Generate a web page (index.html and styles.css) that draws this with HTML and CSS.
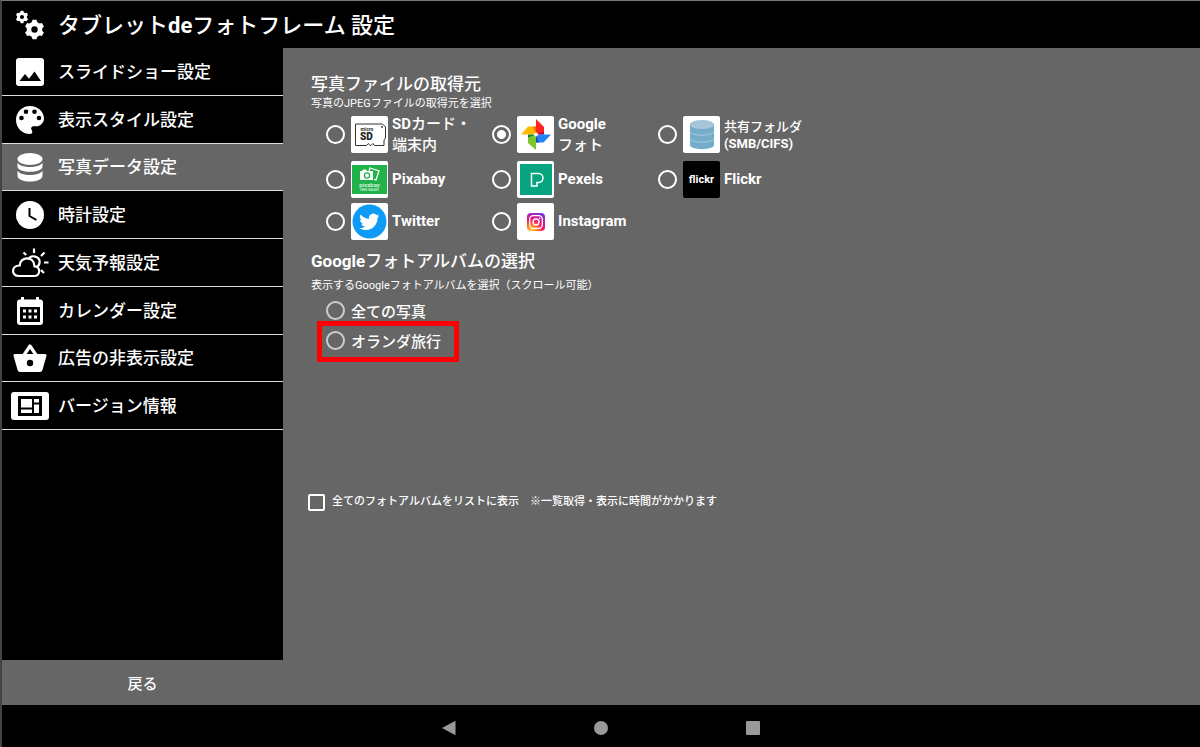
FILE: index.html
```html
<!DOCTYPE html>
<html lang="ja">
<head>
<meta charset="utf-8">
<meta name="viewport" content="width=device-width, initial-scale=1">
<title>タブレットdeフォトフレーム 設定</title>
<link rel="stylesheet" href="styles.css">
</head>
<body>
<div class="screen">
  <header class="header">
    <svg class="icon" viewBox="0 0 40 40" aria-hidden="true">
      <defs>
        <g id="gear">
          <circle r="5.5" fill="none" stroke="#fff" stroke-width="4.6"/>
          <g fill="#fff">
            <path id="tooth" d="M-3-6.5L-2-9.7H2L3-6.5z"/>
            <use href="#tooth" transform="rotate(60)"/><use href="#tooth" transform="rotate(120)"/><use href="#tooth" transform="rotate(180)"/><use href="#tooth" transform="rotate(240)"/><use href="#tooth" transform="rotate(300)"/>
          </g>
        </g>
      </defs>
      <use href="#gear" transform="translate(12 12) scale(.64)"/>
      <use href="#gear" transform="translate(24.5 24.5)"/>
    </svg>
    <h1 class="title">タブレット<b>de</b>フォトフレーム 設定</h1>
  </header>

  <div class="body">
    <aside class="sidebar">
      <nav class="menu">
        <button class="item" type="button">
          <svg class="icon" viewBox="0 0 40 40" aria-hidden="true"><rect x="6" y="6" width="28" height="28" rx="3" fill="#fff"/><path d="M9.500 29l5.500-7 4 4.700 5.500-7.200L31 29z" fill="#000"/></svg>
          スライドショー設定
        </button>
        <button class="item" type="button">
          <svg class="icon" viewBox="0 0 40 40" aria-hidden="true"><path d="M20 6C12 6 6 12.300 6 20s6 14 14 14c1.300 0 2.300-1 2.300-2.300 0-.6-.2-1.200-.6-1.600-.4-.4-.6-.9-.6-1.500 0-1.300 1-2.300 2.300-2.300H26c4.400 0 8-3.500 8-7.800C34 11.600 27.800 6 20 6z" fill="#fff"/><g fill="#000"><circle cx="11.500" cy="18" r="2.300"/><circle cx="16" cy="11.800" r="2.300"/><circle cx="24.500" cy="11.800" r="2.300"/><circle cx="29" cy="18" r="2.300"/></g></svg>
          表示スタイル設定
        </button>
        <button class="item item-active" type="button" aria-current="page">
          <svg class="icon" viewBox="0 0 40 40" aria-hidden="true" fill="#fff"><ellipse cx="20" cy="12" rx="12.500" ry="6"/><path d="M7.500 15.500c2.500 6 22.500 6 25 0v4c0 7-25 7-25 0z"/><path d="M7.500 23.500c2.500 6 22.500 6 25 0v5c0 8-25 8-25 0z"/></svg>
          写真データ設定
        </button>
        <button class="item" type="button">
          <svg class="icon" viewBox="0 0 40 40" aria-hidden="true"><circle cx="20" cy="20" r="14" fill="#fff"/><path d="M19.500 13v8l7 4" fill="none" stroke="#000" stroke-width="2"/></svg>
          時計設定
        </button>
        <button class="item" type="button">
          <svg class="icon" viewBox="0 0 40 40" aria-hidden="true" fill="none" stroke="#fff" stroke-width="2.200"><path d="M8.800 33h15.400c6.600 0 6.600-9.500.3-9.700C24.200 12.500 10 13 9.700 22.500 1 22.500 1 33 8.800 33z"/><path d="M18 16.500c3-5.500 12.500-3.500 11.500 3.500-.3 2-1.600 3.500-3.500 4M24 5.500v4.500M13.500 9.500l2.700 2.500M34.500 9.500L31 13M34 19.500h4.500M31 27l3 3"/></svg>
          天気予報設定
        </button>
        <button class="item" type="button">
          <svg class="icon" viewBox="0 0 40 40" aria-hidden="true"><path d="M11 6h3v2.500h12V6h3v2.500h1c2 0 3 1 3 3V31c0 2-1 3-3 3H10c-2 0-3-1-3-3V11.500c0-2 1-3 3-3h1z" fill="#fff"/><path d="M10 16h20v15H10z" fill="#000"/><path d="M13 18.500h3v3h-3zM18.500 18.500h3v3h-3zM24 18.500h3v3h-3zM13 24.500h3v3h-3zM18.500 24.500h3v3h-3zM24 24.500h3v3h-3z" fill="#fff"/></svg>
          カレンダー設定
        </button>
        <button class="item" type="button">
          <svg class="icon" viewBox="0 0 40 40" aria-hidden="true"><path d="M14 17l6-9 6 9" fill="none" stroke="#fff" stroke-width="3.200" stroke-linejoin="round"/><path d="M5 16h30c1.200 0 1.800.8 1.500 1.800l-4 14c-.3 1.400-1.300 2.200-2.700 2.200H10.200c-1.400 0-2.400-.8-2.700-2.200l-4-14C3.200 16.800 3.800 16 5 16z" fill="#fff"/><circle cx="20" cy="25" r="3.200" fill="#000"/></svg>
          広告の非表示設定
        </button>
        <button class="item" type="button">
          <svg class="icon" viewBox="0 0 40 40" aria-hidden="true"><rect x="1" y="6" width="38" height="28" rx="3" fill="#fff"/><path d="M8 10h24v20H8z" fill="#000"/><path d="M11 13h11v8.500H11zM11 23.500h11V27H11zM24 13h5v3.500h-5zM24 18.500h5V27h-5z" fill="#fff"/></svg>
          バージョン情報
        </button>
      </nav>
      <button class="back" type="button">戻る</button>
    </aside>

    <main class="content">
      <h2 class="heading" id="source-title">写真ファイルの取得元</h2>
      <p class="note">写真のJPEGファイルの取得元を選択</p>
      <div class="sources" role="radiogroup" aria-labelledby="source-title">
        <label class="source"><input class="radio" type="radio" name="source">
          <svg class="logo" viewBox="0 0 37 37" aria-hidden="true"><rect width="37" height="37" rx="2" fill="#fff"/><path d="M4.500 8h27l3 3v11l-1.500 2v5.500H23.500l-1.500-2-2 2h-1l-1.500-2-2 2h-11z" fill="none" stroke="#333" stroke-width="1"/><circle cx="31" cy="11" r=".9" fill="#333"/><text class="sd-small" x="9.500" y="15">micro</text><text class="sd-big" x="9" y="23.500">SD</text></svg>
          <span><b>SD</b>カード・<br>端末内</span></label>
        <label class="source"><input class="radio" type="radio" name="source" checked>
          <svg class="logo" viewBox="0 0 37 37" aria-hidden="true"><rect width="37" height="37" rx="2" fill="#fff"/><path d="M19 3v15.500h8V11z" fill="#f22"/><path d="M19 18.500h8v-3z" fill="#b10d4b"/><path d="M34 18.500H19v8h7.500z" fill="#2484f4"/><path d="M19 18.500v8h3z" fill="#174fb0"/><path d="M19 34V18.500h-8V27z" fill="#7bc52e"/><path d="M19 18.500h-8v3z" fill="#087f4f"/><path d="M4 18.500h15v-8h-8z" fill="#ffb900"/><path d="M19 18.500v-8h-3z" fill="#ee7900"/><circle cx="19" cy="18.500" r="2" fill="#fff"/></svg>
          <span><b>Google</b><br>フォト</span></label>
        <label class="source source-compact"><input class="radio" type="radio" name="source">
          <svg class="logo" viewBox="0 0 37 37" aria-hidden="true"><rect width="37" height="37" rx="2" fill="#fff"/><path d="M7 9v20c0 5.500 24 5.500 24 0V9z" fill="#75adc9"/><ellipse cx="19" cy="8.500" rx="12" ry="4.500" fill="#a7c6db"/><path d="M7 15c0 5.500 24 5.500 24 0M7 22c0 5.500 24 5.500 24 0" fill="none" stroke="#a9cbe0"/></svg>
          <span>共有フォルダ<br><b>(SMB/CIFS)</b></span></label>
        <label class="source"><input class="radio" type="radio" name="source">
          <svg class="logo" viewBox="0 0 37 37" aria-hidden="true"><rect width="37" height="37" rx="2" fill="#fff"/><path d="M1 4h35v29H1z" fill="#20b34a"/><path d="M18 10l1-3 9 3-3 9-2-.6" fill="none" stroke="#fff" stroke-width="1.300"/><path d="M9 10h2l1-1.500h3l1 1.500h6v9H9z" fill="#fff"/><circle cx="16" cy="14.500" r="2.600" fill="none" stroke="#20b34a" stroke-width="1.300"/><text class="px-big" x="18.500" y="26">pixabay</text><text class="px-small" x="18.500" y="30">FREE IMAGES</text></svg>
          <b>Pixabay</b></label>
        <label class="source"><input class="radio" type="radio" name="source">
          <svg class="logo" viewBox="0 0 37 37" aria-hidden="true"><rect width="37" height="37" rx="2" fill="#fff"/><path d="M3 3h32v31H3z" fill="#06a57f"/><path d="M14.500 12.500h7a4.500 4.500 0 0 1 0 9h-1.500v3.500h-5.500z" fill="none" stroke="#fff" stroke-width="1.500"/></svg>
          <b>Pexels</b></label>
        <label class="source"><input class="radio" type="radio" name="source">
          <svg class="logo" viewBox="0 0 37 37" aria-hidden="true"><rect width="37" height="37" rx="2" fill="#000"/><text class="fl" x="18.500" y="22">flickr</text></svg>
          <b>Flickr</b></label>
        <label class="source"><input class="radio" type="radio" name="source">
          <svg class="logo" viewBox="0 0 37 37" aria-hidden="true"><rect width="37" height="37" rx="2" fill="#fff"/><circle cx="18.500" cy="18.500" r="17" fill="#0d9bf5"/><path transform="translate(8.500 8.500) scale(.84)" d="M23.600 4.900c-.9.400-1.800.7-2.800.8 1-.6 1.800-1.600 2.200-2.700-1 .6-2 1-3.100 1.200a4.900 4.900 0 0 0-8.400 4.500C7.400 8.500 3.700 6.500 1.300 3.500a4.900 4.900 0 0 0 1.500 6.600c-.8 0-1.600-.2-2.200-.6v.1c0 2.400 1.700 4.400 3.900 4.800-.7.200-1.500.2-2.200.1.600 2 2.400 3.400 4.600 3.400a9.900 9.900 0 0 1-7.200 2A13.900 13.900 0 0 0 7.500 22c9.100 0 14.300-7.700 14-14.600.8-.7 1.500-1.500 2.100-2.500z" fill="#fff"/></svg>
          <b>Twitter</b></label>
        <label class="source"><input class="radio" type="radio" name="source">
          <svg class="logo" viewBox="0 0 37 37" aria-hidden="true"><defs><radialGradient id="insta" cx=".25" cy="1" r="1.100"><stop offset="0" stop-color="#ffd24a"/><stop offset=".3" stop-color="#ff7a1f"/><stop offset=".6" stop-color="#f2107c"/><stop offset="1" stop-color="#7a32dc"/></radialGradient></defs><rect width="37" height="37" rx="2" fill="#fff"/><rect x="10" y="10" width="18" height="18" rx="4" fill="url(#insta)"/><g fill="none" stroke="#fff" stroke-width="1.300"><rect x="12.700" y="12.700" width="12.600" height="12.600" rx="3.500"/><circle cx="19" cy="19" r="3"/></g><circle cx="22.600" cy="15.400" r=".8" fill="#fff"/></svg>
          <b>Instagram</b></label>
      </div>

      <h2 class="heading" id="album-title"><b>Google</b>フォトアルバムの選択</h2>
      <p class="note note-album">表示するGoogleフォトアルバムを選択（スクロール可能）</p>
      <div class="albums" role="radiogroup" aria-labelledby="album-title">
        <label class="album"><input class="radio radio-soft" type="radio" name="album">全ての写真</label>
        <label class="album album-marked"><input class="radio radio-soft" type="radio" name="album">オランダ旅行</label>
      </div>
      <label class="all"><input class="check" type="checkbox">全てのフォトアルバムをリストに表示　※一覧取得・表示に時間がかかります</label>
    </main>
  </div>

  <footer class="system">
    <button class="key" type="button" aria-label="戻る"><svg class="key-icon" viewBox="0 0 16 16"><path d="M1 8L14.500.8v14.400z"/></svg></button>
    <button class="key" type="button" aria-label="ホーム"><svg class="key-icon" viewBox="0 0 16 16"><circle cx="8" cy="8" r="7"/></svg></button>
    <button class="key" type="button" aria-label="履歴"><svg class="key-icon" viewBox="0 0 16 16"><rect x="1" y="1" width="14" height="14" rx="1"/></svg></button>
  </footer>
</div>
</body>
</html>
```
FILE: styles.css
```css
* { box-sizing: border-box; }

body {
  margin: 0;
  background: #000;
  color: #fff;
  font-family: Roboto, "Noto Sans CJK JP", sans-serif;
  font-weight: 500;
}

b { font-weight: 700; }

button {
  border: 0;
  padding: 0;
  background: none;
  color: inherit;
  font: inherit;
  cursor: pointer;
}

.screen {
  display: flex;
  flex-direction: column;
  min-height: 100vh;
  border-top: 1px solid #777;
  border-left: 2px solid #444;
}

.header {
  display: flex;
  align-items: center;
  gap: 8px;
  height: 47px;
  padding-left: 8px;
}

.icon {
  flex: none;
  width: 40px;
  height: 40px;
}

.title {
  margin: 0;
  padding-top: 2px;
  font-size: 22px;
  line-height: 32px;
  font-weight: 500;
}

.body {
  flex: 1;
  display: flex;
  background: #666;
}

.sidebar {
  flex: none;
  display: flex;
  flex-direction: column;
  width: 281px;
  background: #000;
}

.menu {
  display: grid;
  grid-template-rows: repeat(8, 1fr);
  height: 382px;
}

.item {
  display: flex;
  align-items: center;
  gap: 8px;
  padding: 1px 0 0 8px;
  border-bottom: 1px solid #ddd;
  font-size: 17px;
  line-height: 24px;
  text-align: left;
}

.item-active { background: #666; }

.back {
  height: 45px;
  margin-top: auto;
  background: #666;
  font-size: 15px;
}

.content {
  flex: 1;
  padding: 24px 28px;
}

.heading {
  margin: 0;
  font-size: 17px;
  line-height: 24px;
  font-weight: 500;
}

.note {
  margin: 0;
  font-size: 11px;
  line-height: 16px;
  font-weight: 400;
}

.sources {
  display: grid;
  grid-template-columns: repeat(3, 166px);
  grid-template-rows: 43px 37px 37px;
  row-gap: 5px;
  margin: 1px 0 9px 15px;
}

.source {
  display: flex;
  align-items: center;
  font-size: 15px;
  line-height: 21px;
  white-space: nowrap;
}

.source-compact {
  font-size: 13px;
  line-height: 17px;
}

.logo {
  flex: none;
  width: 37px;
  height: 37px;
  margin: 0 4px 0 6px;
}

.radio {
  appearance: none;
  flex: none;
  width: 19px;
  height: 19px;
  margin: 0;
  border: 2px solid #fff;
  border-radius: 50%;
}

.radio:checked {
  background: radial-gradient(circle, #fff 4px, transparent 5px);
}

.radio-soft { border-color: #ccc; }

.note-album { margin-top: 5px; }

.albums {
  display: flex;
  flex-direction: column;
  height: 198px;
  margin: 1px 0 0 15px;
}

.album {
  position: relative;
  display: flex;
  align-items: center;
  align-self: flex-start;
  gap: 6px;
  height: 30px;
  font-size: 15px;
}

.album-marked::after {
  content: "";
  position: absolute;
  inset: -4px -18px -7px -9px;
  border: 5px solid #f00;
}

.all {
  display: flex;
  align-items: center;
  gap: 7px;
  margin-left: -3px;
  font-size: 11px;
  line-height: 18px;
}

.check {
  appearance: none;
  flex: none;
  width: 17px;
  height: 17px;
  margin: 0;
  border: 2px solid #fff;
  border-radius: 2px;
}

.system {
  display: flex;
  justify-content: center;
  gap: 136px;
  height: 42px;
}

.key {
  display: flex;
  align-items: center;
  padding-top: 3px;
}

.key-icon {
  width: 16px;
  height: 16px;
  fill: #999;
}

.sd-small { font: 700 5px Roboto, sans-serif; fill: #333; }
.sd-big { font: 900 10px Roboto, sans-serif; fill: #222; }
.px-big { font: 400 6px Roboto, sans-serif; fill: #fff; text-anchor: middle; }
.px-small { font: 400 3px Roboto, sans-serif; fill: #fff; text-anchor: middle; }
.fl { font: 700 11px Roboto, sans-serif; fill: #fff; text-anchor: middle; }
```
